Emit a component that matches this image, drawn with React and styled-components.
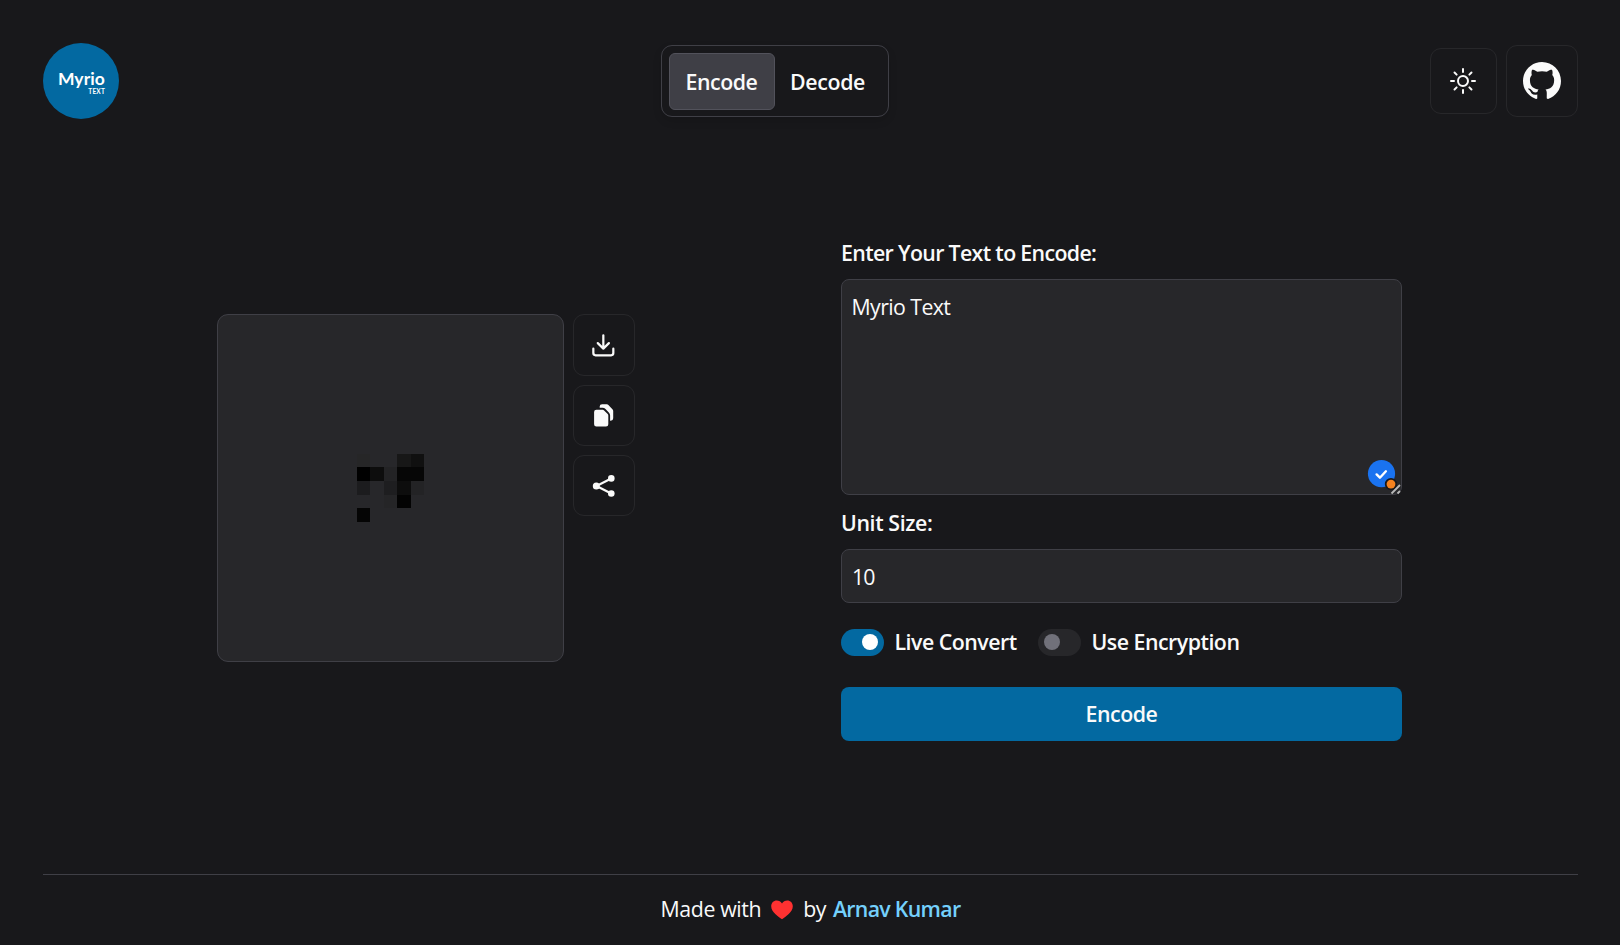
import React from "react";
import styled, { createGlobalStyle } from "styled-components";

const GlobalStyle = createGlobalStyle`
  *, *::before, *::after { box-sizing: border-box; }
  body {
    margin: 0;
    background: #18181b;
    color: #fafafa;
    font-family: "Open Sans", "Noto Sans", sans-serif;
    font-size: 21.33px;
    line-height: 32px;
  }
`;

const Page = styled.div`
  display: flex;
  flex-direction: column;
  height: 945px;
  padding: 43px 42px 0 43px;
  overflow: hidden;
`;

const Header = styled.header`
  display: flex;
  align-items: center;
  justify-content: space-between;
  height: 76px;
`;

const Logo = styled.div`
  display: flex;
  flex-direction: column;
  align-items: flex-end;
  width: 76px;
  height: 76px;
  padding: 26px 14px 0 0;
  border-radius: 50%;
  background: #0369a1;
  color: #fff;
  font-family: Lato, sans-serif;
  font-weight: 700;
`;

const LogoName = styled.span`
  font-size: 17.5px;
  line-height: 20px;
  letter-spacing: 0.1px;
`;

const LogoSub = styled.span`
  font-size: 6.5px;
  line-height: 6px;
  letter-spacing: 0.2px;
`;

const Tabs = styled.nav`
  display: flex;
  width: 228px;
  height: 72px;
  padding: 7px;
  border: 1px solid #3f3f46;
  border-radius: 11px;
  box-shadow: 0 4px 8px rgba(0, 0, 0, 0.12);
`;

const Tab = styled.button`
  width: 106px;
  height: 57px;
  padding: 0;
  border: 1px solid ${(p) => (p.$active ? "#52525b" : "transparent")};
  border-radius: 6px;
  background: ${(p) => (p.$active ? "#3f3f46" : "transparent")};
  color: #fafafa;
  font: inherit;
  font-weight: 600;
  letter-spacing: ${(p) => p.$track || 0}px;
`;

const Actions = styled.div`
  display: flex;
  align-items: center;
  gap: 9px;
`;

const IconButton = styled.button`
  display: flex;
  align-items: center;
  justify-content: center;
  flex: none;
  width: ${(p) => p.$w}px;
  height: ${(p) => p.$h}px;
  padding: 0 ${(p) => p.$nudge || 0}px 0 0;
  border: 1px solid #27272a;
  border-radius: 11px;
  background: transparent;
  color: #fafafa;
`;

const Main = styled.main`
  display: flex;
  align-items: flex-start;
  height: 755px;
  padding: 118px 0 0 174px;
`;

const Preview = styled.section`
  display: flex;
  align-items: flex-start;
  gap: 9px;
  width: 624px;
  padding-top: 77px;
`;

const Canvas = styled.div`
  display: flex;
  align-items: center;
  justify-content: center;
  width: 347px;
  height: 348px;
  border: 1px solid #3f3f46;
  border-radius: 11px;
  background: #27272a;
`;

const PixelGrid = styled.div`
  display: grid;
  grid-template-columns: 13px 14px 13px 14px 13px;
  grid-template-rows: 13px 14px 14px 13px 14px;
`;

const Pixel = styled.i`
  background: ${(p) => p.$c || "transparent"};
`;

const Tools = styled.div`
  display: flex;
  flex-direction: column;
  gap: 9px;
`;

const Form = styled.form`
  display: flex;
  flex-direction: column;
  width: 561px;
`;

const Label = styled.label`
  height: 32px;
  margin-bottom: ${(p) => p.$gap}px;
  font-weight: 600;
  white-space: nowrap;
  letter-spacing: ${(p) => p.$track}px;
`;

const AreaWrap = styled.div`
  position: relative;
  height: 216px;
  margin-bottom: 12px;
`;

const Area = styled.textarea`
  display: block;
  width: 100%;
  height: 100%;
  padding: 11px 9.5px;
  border: 1px solid #3f3f46;
  border-radius: 8px;
  outline: none;
  resize: none;
  background: #27272a;
  color: #fafafa;
  font: inherit;
  letter-spacing: -0.6px;
`;

const Checker = styled.svg`
  position: absolute;
  right: 0;
  bottom: 0;
`;

const Input = styled.input`
  width: 100%;
  height: 54px;
  padding: 0 10px;
  border: 1px solid #3f3f46;
  border-radius: 8px;
  outline: none;
  background: #27272a;
  color: #fafafa;
  font: inherit;
  letter-spacing: -0.9px;
`;

const Toggles = styled.div`
  display: flex;
  align-items: center;
  height: 32px;
  margin: 23px 0 29px;
`;

const Toggle = styled.span`
  display: flex;
  align-items: center;
  gap: 10.5px;
  width: ${(p) => p.$w}px;
  font-weight: 600;
  white-space: nowrap;
  letter-spacing: ${(p) => p.$track}px;
`;

const Track = styled.span`
  display: flex;
  align-items: center;
  justify-content: ${(p) => (p.$on ? "flex-end" : "flex-start")};
  flex: none;
  width: 43px;
  height: 27px;
  padding: 0 6px 1px;
  border-radius: 14px;
  background: ${(p) => (p.$on ? "#0369a1" : "#27272a")};
`;

const Thumb = styled.span`
  width: 16px;
  height: 16px;
  border-radius: 50%;
  background: ${(p) => (p.$on ? "#fff" : "#71717a")};
`;

const Submit = styled.button`
  height: 54px;
  padding: 0;
  border: 0;
  border-radius: 8px;
  background: #0369a1;
  color: #fafafa;
  font: inherit;
  font-weight: 600;
  letter-spacing: -0.45px;
`;

const Footer = styled.footer`
  display: flex;
  align-items: center;
  justify-content: center;
  height: 71px;
  padding-bottom: 3px;
  border-top: 1px solid #3f3f46;
  white-space: nowrap;
`;

const FootText = styled.span`
  letter-spacing: ${(p) => p.$track}px;
`;

const Author = styled.a`
  margin-left: 7px;
  color: #74d0fc;
  font-weight: 600;
  letter-spacing: -0.7px;
`;

const Heart = styled.svg`
  margin: 3px 10px 0;
`;

const CELLS = [
  "#262627", "", "", "#171717", "#101010",
  "#000000", "#0d0d0d", "#232325", "#060606", "#060606",
  "#1c1c1e", "", "#1e1e20", "#0d0d0d", "#232325",
  "", "", "#252527", "#030303", "",
  "#050505", "", "", "", "",
];

const SunIcon = () => (
  <svg width="32" height="32" viewBox="0 0 24 24" fill="none" stroke="currentColor" strokeWidth="1.5" strokeLinecap="round" strokeLinejoin="round">
    <path d="M12 3v2.25m6.364.386-1.591 1.591M21 12h-2.25m-.386 6.364-1.591-1.591M12 18.75V21m-4.773-4.227-1.591 1.591M5.25 12H3m4.227-4.773L5.636 5.636M15.75 12a3.75 3.75 0 1 1-7.5 0 3.75 3.75 0 0 1 7.5 0Z" />
  </svg>
);

const GithubIcon = () => (
  <svg width="38" height="38" viewBox="0 0 16 16" fill="currentColor">
    <path d="M8 0C3.58 0 0 3.58 0 8c0 3.54 2.29 6.53 5.47 7.59.4.07.55-.17.55-.38 0-.19-.01-.82-.01-1.49-2.01.37-2.53-.49-2.69-.94-.09-.23-.48-.94-.82-1.13-.28-.15-.68-.52-.01-.53.63-.01 1.08.58 1.23.82.72 1.21 1.87.87 2.33.66.07-.52.28-.87.51-1.07-1.78-.2-3.64-.89-3.64-3.95 0-.87.31-1.59.82-2.15-.08-.2-.36-1.02.08-2.12 0 0 .67-.21 2.2.82.64-.18 1.32-.27 2-.27s1.36.09 2 .27c1.53-1.04 2.2-.82 2.2-.82.44 1.1.16 1.92.08 2.12.51.56.82 1.27.82 2.15 0 3.07-1.87 3.75-3.65 3.95.29.25.54.73.54 1.48 0 1.07-.01 1.93-.01 2.2 0 .21.15.46.55.38A8.01 8.01 0 0 0 16 8c0-4.42-3.58-8-8-8" />
  </svg>
);

const DownloadIcon = () => (
  <svg width="26.67" height="26.67" viewBox="0 0 24 24" fill="none" stroke="currentColor" strokeWidth="2" strokeLinecap="round" strokeLinejoin="round">
    <path d="M21 15v4a2 2 0 0 1-2 2H5a2 2 0 0 1-2-2v-4M7 10l5 5 5-5M12 15V3" />
  </svg>
);

const CopyIcon = () => (
  <svg width="20" height="23" viewBox="0 0 20 23" fill="currentColor">
    <path d="M2.4 5.8h6.3c.6 0 1 .2 1.4.6l3.6 3.7c.4.4.6.9.6 1.4v8.8a2.3 2.3 0 0 1-2.3 2.3H2.4A2.3 2.3 0 0 1 .1 20.3V8.1a2.3 2.3 0 0 1 2.3-2.3Z" />
    <path d="M5.7 3.7V2.600A2.4 2.4 0 0 1 8.1.2h4.7c.6 0 1.2.2 1.6.7l4 4.3c.5.5.8 1.1.8 1.8v7.3a2.4 2.4 0 0 1-2.4 2.4h-.7v-5.2c0-1.2-.5-2.3-1.3-3.1l-3.3-3.400a4.4 4.4 0 0 0-3.1-1.3Z" />
  </svg>
);

const ShareIcon = () => (
  <svg width="24" height="24" viewBox="0 0 24 24" fill="currentColor">
    <path d="M19.2 4.5 4.5 12l14.7 7.5" fill="none" stroke="currentColor" strokeWidth="2.2" />
    <circle cx="4.3" cy="12" r="3.5" />
    <circle cx="19.3" cy="4.4" r="3.3" />
    <circle cx="19.3" cy="19.5" r="3.3" />
  </svg>
);

export default function App() {
  return (
    <>
      <GlobalStyle />
      <Page>
        <Header>
          <Logo>
            <LogoName>Myrio</LogoName>
            <LogoSub>TEXT</LogoSub>
          </Logo>
          <Tabs>
            <Tab $active $track={-0.45}>Encode</Tab>
            <Tab $track={-0.35}>Decode</Tab>
          </Tabs>
          <Actions>
            <IconButton $w={67} $h={66} $nudge={1} aria-label="Theme"><SunIcon /></IconButton>
            <IconButton $w={72} $h={72} aria-label="GitHub"><GithubIcon /></IconButton>
          </Actions>
        </Header>

        <Main>
          <Preview>
            <Canvas>
              <PixelGrid>
                {CELLS.map((c, i) => <Pixel key={i} $c={c} />)}
              </PixelGrid>
            </Canvas>
            <Tools>
              <IconButton $w={62} $h={62} $nudge={1} aria-label="Download"><DownloadIcon /></IconButton>
              <IconButton $w={62} $h={61} aria-label="Copy"><CopyIcon /></IconButton>
              <IconButton $w={62} $h={61} $nudge={1} aria-label="Share"><ShareIcon /></IconButton>
            </Tools>
          </Preview>

          <Form>
            <Label $gap={10} $track={-0.66}>Enter Your Text to Encode:</Label>
            <AreaWrap>
              <Area defaultValue="Myrio Text" spellCheck={false} />
              <Checker width="36" height="36" viewBox="0 0 36 36">
                <circle cx="15.5" cy="14.7" r="13.6" fill="#1a73f0" />
                <path d="m10.6 15.4 3.3 3.3 6-6.4" fill="none" stroke="#fff" strokeWidth="2.4" strokeLinecap="round" strokeLinejoin="round" />
                <circle cx="25" cy="25.1" r="6.2" fill="#18181b" />
                <circle cx="25" cy="25.1" r="4.4" fill="#f5821f" />
                <path d="m25.5 34.5 8.5-8.5M31.5 34.5l2.5-2.5" stroke="#b8b8b8" strokeWidth="1.8" />
              </Checker>
            </AreaWrap>
            <Label $gap={10} $track={-0.4}>Unit Size:</Label>
            <Input defaultValue="10" />
            <Toggles>
              <Toggle $w={197} $track={-0.5}><Track $on><Thumb $on /></Track>Live Convert</Toggle>
              <Toggle $w={210} $track={-0.5}><Track><Thumb /></Track>Use Encryption</Toggle>
            </Toggles>
            <Submit type="button">Encode</Submit>
          </Form>
        </Main>

        <Footer>
          <FootText $track={-0.4}>Made with</FootText>
          <Heart width="22" height="20" viewBox="0 0 22 20">
            <path d="M11 19.3C7.5 16.8.2 12.3.2 6.3.2 3 2.6.6 5.7.6c2.2 0 4.2 1.1 5.3 3C12.1 1.7 14.1.6 16.3.6c3.1 0 5.5 2.4 5.5 5.7 0 6-7.3 10.5-10.8 13Z" fill="#ff3131" />
          </Heart>
          <FootText $track={-0.5}>by</FootText>
          <Author>Arnav Kumar</Author>
        </Footer>
      </Page>
    </>
  );
}
